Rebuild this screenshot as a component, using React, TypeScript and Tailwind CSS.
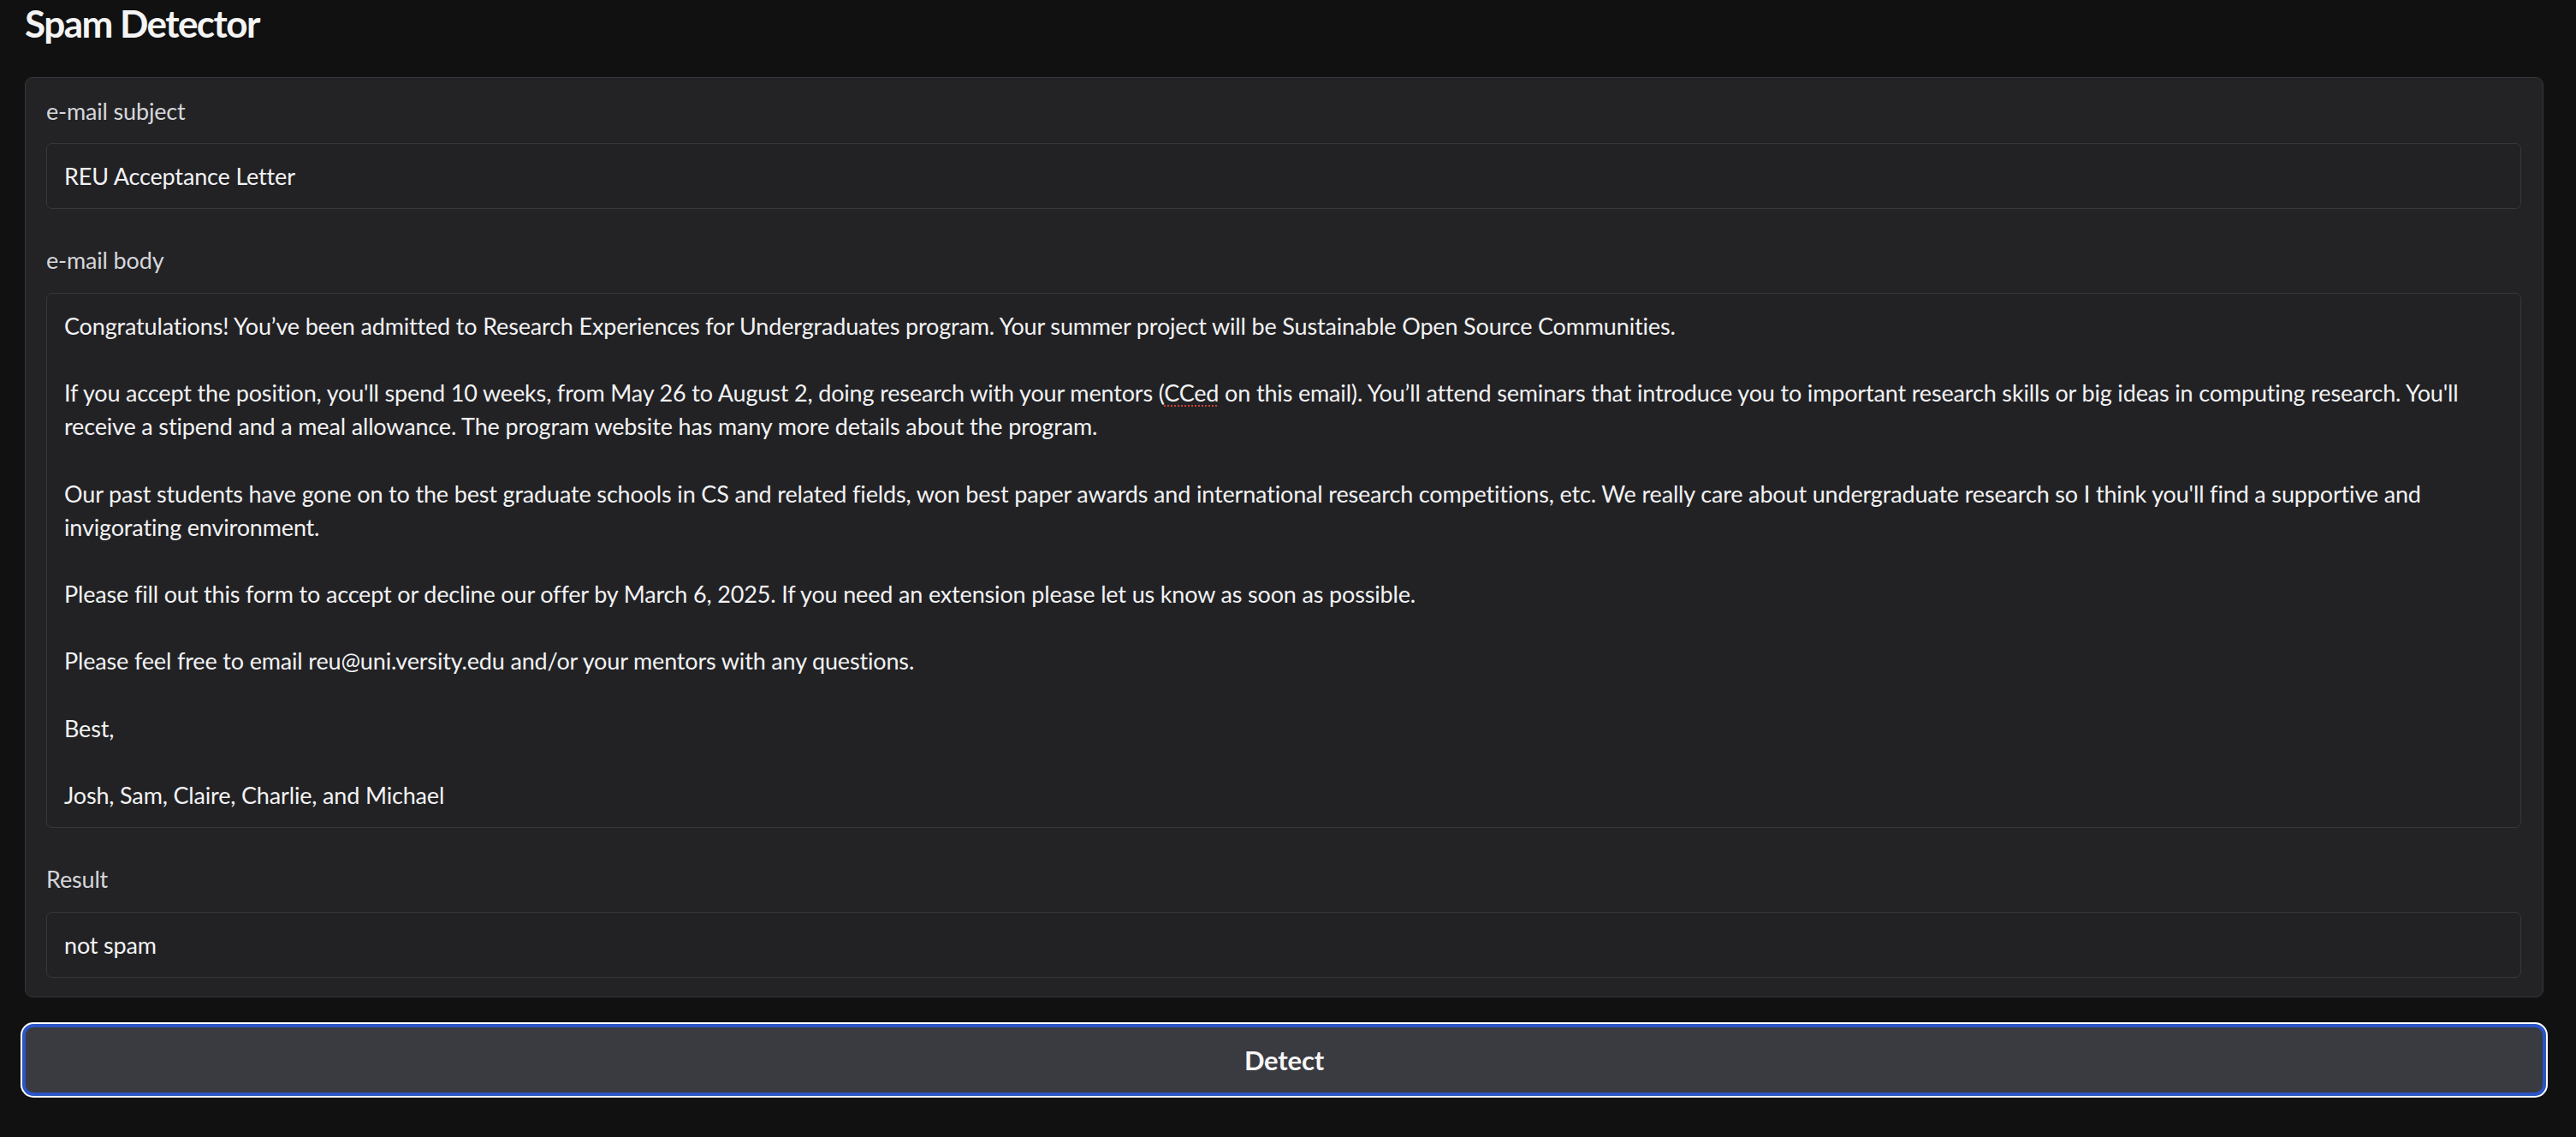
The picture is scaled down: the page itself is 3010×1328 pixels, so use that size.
import React from "react";

const FONT = { fontFamily: "Lato, 'Noto Sans', 'Liberation Sans', sans-serif" };

const BODY_LINES: React.ReactNode[] = [
  "Congratulations! You’ve been admitted to Research Experiences for Undergraduates program. Your summer project will be Sustainable Open Source Communities.",
  "",
  <>
    If you accept the position, you'll spend 10 weeks, from May 26 to August 2, doing research with your mentors (
    <span className="underline decoration-dotted decoration-[#c8432f] decoration-2 underline-offset-[5px]">CCed</span> on
    this email). You’ll attend seminars that introduce you to important research skills or big ideas in computing research.
    You'll
  </>,
  "receive a stipend and a meal allowance. The program website has many more details about the program.",
  "",
  "Our past students have gone on to the best graduate schools in CS and related fields, won best paper awards and international research competitions, etc. We really care about undergraduate research so I think you'll find a supportive and",
  "invigorating environment.",
  "",
  "Please fill out this form to accept or decline our offer by March 6, 2025. If you need an extension please let us know as soon as possible.",
  "",
  "Please feel free to email reu@uni.versity.edu and/or your mentors with any questions.",
  "",
  "Best,",
  "",
  "Josh, Sam, Claire, Charlie, and Michael",
];

function Label({ children }: { children: React.ReactNode }) {
  return <div className="text-[27px] leading-[39.2px] text-[#d6d6da] mb-[18px]">{children}</div>;
}

function Field({ children }: { children: React.ReactNode }) {
  return (
    <div className="rounded-[7px] border border-[#37373d] bg-[#222225] px-[20px] py-[18px] text-[27px] leading-[39.2px] text-[#f2f2f3]">
      {children}
    </div>
  );
}

export default function App() {
  return (
    <div className="min-h-screen bg-[#111111] pl-[29px] pr-[38px] pb-[46px] tracking-[-0.01em]" style={FONT}>
      <h1 className="text-[44px] leading-[55px] font-bold text-[#f4f4f4] tracking-[-0.035em]">Spam Detector</h1>

      <div className="mt-[35px] rounded-[9px] border border-[#36363b] bg-[#232326] pl-[24px] pr-[25px] pt-[19px] pb-[22px]">
        <Label>e-mail subject</Label>
        <Field>REU Acceptance Letter</Field>

        <div className="mt-[40px]">
          <Label>e-mail body</Label>
          <Field>
            {BODY_LINES.map((line, i) => (
              <div key={i} className="whitespace-nowrap h-[39.2px]">
                {line}
              </div>
            ))}
          </Field>
        </div>

        <div className="mt-[40px]">
          <Label>Result</Label>
          <Field>not spam</Field>
        </div>
      </div>

      <button
        type="button"
        className="mt-[31px] -mx-[3px] w-[calc(100%+6px)] h-[84px] rounded-[13px] border-[4px] border-[#2b54c5] bg-[#3a3a41] text-[31px] font-bold text-[#f6f6f6] shadow-[0_0_0_2px_#ffffff]"
      >
        Detect
      </button>
    </div>
  );
}
